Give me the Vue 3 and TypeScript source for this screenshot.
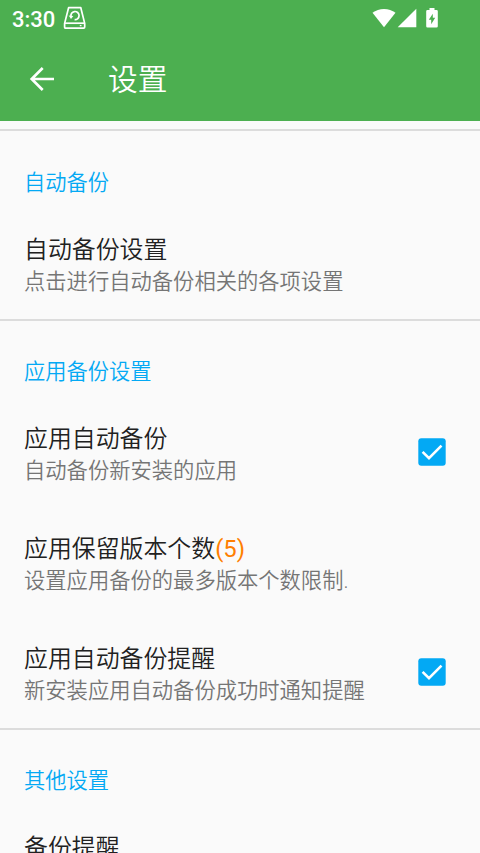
<script setup lang="ts">
import { ref } from 'vue'

interface SettingItem {
  title: string
  count?: string
  summary: string
  checked?: boolean
}

interface SettingGroup {
  name: string
  items: SettingItem[]
}

const groups = ref<SettingGroup[]>([
  {
    name: '自动备份',
    items: [{ title: '自动备份设置', summary: '点击进行自动备份相关的各项设置' }],
  },
  {
    name: '应用备份设置',
    items: [
      { title: '应用自动备份', summary: '自动备份新安装的应用', checked: true },
      { title: '应用保留版本个数', count: '(5)', summary: '设置应用备份的最多版本个数限制.' },
      { title: '应用自动备份提醒', summary: '新安装应用自动备份成功时通知提醒', checked: true },
    ],
  },
  {
    name: '其他设置',
    items: [{ title: '备份提醒', summary: '' }],
  },
])

function toggle(item: SettingItem) {
  if (item.checked !== undefined) item.checked = !item.checked
}
</script>

<template>
  <div class="screen">
    <header class="top">
      <div class="status">
        <span class="clock">3:30</span>
        <svg class="disk" viewBox="0 0 24 24" fill="none" stroke="#fff" stroke-width="1.7" stroke-linejoin="round">
          <path d="M5.6 1.7h12.2l3.9 15.7v3.7q0 1-1 1H2.6q-1 0-1-1v-3.7z" />
          <path d="M1.8 17.2h19.7" />
          <path d="M8 10.6a4.1 4.1 0 1 1 3.6 3.1" />
          <path d="M5.7 9.6l2.3 3.3 2.3-2.9z" fill="#fff" stroke="none" />
          <path d="M16.8 19.6h1.7" stroke-width="1.3" />
        </svg>
        <span class="spacer"></span>
        <svg class="wifi" viewBox="0 0 24 20" fill="#fff">
          <path d="M12 19.3L.5 4.8Q5.5.9 12 .9t11.5 3.9z" />
        </svg>
        <svg class="signal" viewBox="0 0 20 20" fill="#fff"><path d="M19.3.7v18.6H.7z" /></svg>
        <svg class="battery" viewBox="0 0 12 20">
          <path fill="#fff" d="M3.5 0h5v2h2q1.3 0 1.3 1.3v14.9q0 1.3-1.3 1.3h-9Q.2 19.5.2 18.2V3.3Q.2 2 1.5 2h2z" />
          <path fill="#4caf50" d="M6.8 5.8v4h2.4l-4 6.5v-4.6H2.8z" />
        </svg>
      </div>
      <div class="bar">
        <svg class="back" viewBox="0 0 26 26" fill="none" stroke="#fff" stroke-width="2.7">
          <path d="M25 13H3M13.7 2L2.7 13l11 11" />
        </svg>
        <h1>设置</h1>
      </div>
    </header>
    <main>
      <section v-for="group in groups" :key="group.name" class="group">
        <h2>{{ group.name }}</h2>
        <div v-for="item in group.items" :key="item.title" class="item" @click="toggle(item)">
          <div class="copy">
            <div class="title">{{ item.title }}<span v-if="item.count" class="count">{{ item.count }}</span></div>
            <div class="summary">{{ item.summary }}</div>
          </div>
          <svg v-if="item.checked !== undefined" class="check" viewBox="0 0 28 28">
            <rect x=".3" y=".3" width="27.4" height="27.4" rx="3" :fill="item.checked ? '#03a9f4' : '#757575'" />
            <path v-if="item.checked" d="M4.6 13.9l6.4 6.3L23.5 7.7" fill="none" stroke="#fff" stroke-width="2.6" />
            <rect v-else x="3" y="3" width="22" height="22" fill="#fafafa" />
          </svg>
        </div>
      </section>
    </main>
  </div>
</template>

<style>
body {
  overflow: hidden;
}
</style>

<style scoped>
.screen {
  height: 853px;
  overflow: hidden;
  background: #fafafa;
  font-family: Roboto, "Noto Sans CJK SC", sans-serif;
  color: #212121;
}
.top {
  height: 121px;
  background: #4caf50;
  color: #fff;
}
.status {
  display: flex;
  align-items: center;
  box-sizing: border-box;
  height: 36px;
  padding: 0 42px 0 12px;
}
.clock {
  font-size: 22px;
  font-weight: 500;
  line-height: 36px;
  padding-top: 3px;
}
.disk {
  width: 24px;
  height: 24px;
  margin-left: 8px;
}
.spacer {
  flex: 1;
}
.wifi {
  width: 24px;
  height: 20px;
}
.signal {
  width: 20px;
  height: 20px;
  margin-left: 1px;
}
.battery {
  width: 12px;
  height: 20px;
  margin-left: 9px;
}
.bar {
  display: flex;
  align-items: center;
  height: 85px;
  padding-left: 29px;
}
.back {
  width: 26px;
  height: 26px;
}
h1 {
  margin: 0 0 0 53px;
  padding-top: 2px;
  font-size: 29.7px;
  font-weight: 350;
  line-height: 40px;
}
main {
  padding-top: 8px;
}
.group {
  border-top: 2px solid #dcdcdc;
}
h2 {
  box-sizing: border-box;
  height: 77px;
  margin: 0;
  padding: 35px 24px 0;
  color: #03a9f4;
  font-size: 21.25px;
  font-weight: 350;
  line-height: 32px;
}
.group:first-child h2 {
  height: 78px;
  padding-top: 36px;
}
.item {
  display: flex;
  align-items: center;
  box-sizing: border-box;
  height: 110px;
  padding: 0 34px 0 24px;
}
.copy {
  flex: 1;
  padding-top: 2px;
  font-weight: 350;
  white-space: nowrap;
}
.title {
  font-size: 23.9px;
  line-height: 32px;
}
.count {
  color: #ff7f00;
  font-weight: 400;
}
.summary {
  min-height: 31px;
  color: #757575;
  font-size: 21.3px;
  line-height: 31px;
}
.check {
  width: 28px;
  height: 28px;
  margin-bottom: 2px;
}
</style>
